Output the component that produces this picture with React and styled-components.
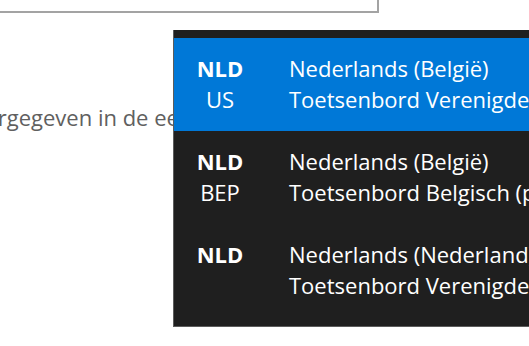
import React from 'react';
import styled, { createGlobalStyle } from 'styled-components';

const GlobalStyle = createGlobalStyle`
  html, body {
    margin: 0;
    padding: 0;
    background: #ffffff;
    overflow: hidden;
  }
  body {
    font-family: "Open Sans", "Noto Sans", "Liberation Sans", sans-serif;
  }
`;

const Page = styled.div`
  position: relative;
  width: 529px;
  height: 346px;
  overflow: hidden;
`;

const InputBox = styled.div`
  margin-left: -10px;
  margin-top: -20px;
  width: 385px;
  height: 29px;
  border: 2px solid #a3a3a3;
  box-sizing: content-box;
  background: #fff;
`;

const HintText = styled.p`
  margin: 90px 0 0 -44px;
  font-size: 22px;
  line-height: 28px;
  color: #606060;
  white-space: nowrap;
`;

const Switcher = styled.div`
  position: absolute;
  left: 173px;
  top: 30px;
  width: 380px;
  padding: 8px 0 9px;
  background: #1f1f1f;
  border-left: 1px solid #5c5c5c;
  border-bottom: 1px solid #5c5c5c;
  box-sizing: border-box;
`;

const Row = styled.div`
  display: flex;
  height: 93px;
  padding-top: 15px;
  box-sizing: border-box;
  background: ${(p) => (p.$active ? '#0078d7' : 'transparent')};
  color: #ffffff;
  font-size: 22px;
  line-height: 31px;
`;

const Code = styled.div`
  width: 92px;
  flex: none;
  text-align: center;
`;

const Abbr = styled.div`
  font-weight: 700;
`;

const Names = styled.div`
  padding-left: 23px;
  white-space: nowrap;
`;

const layouts = [
  { lang: 'NLD', kb: 'US', name: 'Nederlands (België)', desc: 'Toetsenbord Verenigde Staten', active: true },
  { lang: 'NLD', kb: 'BEP', name: 'Nederlands (België)', desc: 'Toetsenbord Belgisch (punt)' },
  { lang: 'NLD', kb: '', name: 'Nederlands (Nederland)', desc: 'Toetsenbord Verenigde Staten' },
];

export default function App() {
  return (
    <Page>
      <GlobalStyle />
      <InputBox />
      <HintText>weergegeven in de eerste regel van het venster</HintText>
      <Switcher>
        {layouts.map((l, i) => (
          <Row key={i} $active={l.active}>
            <Code>
              <Abbr>{l.lang}</Abbr>
              <div>{l.kb || '\u00a0'}</div>
            </Code>
            <Names>
              <div>{l.name}</div>
              <div>{l.desc}</div>
            </Names>
          </Row>
        ))}
      </Switcher>
    </Page>
  );
}
